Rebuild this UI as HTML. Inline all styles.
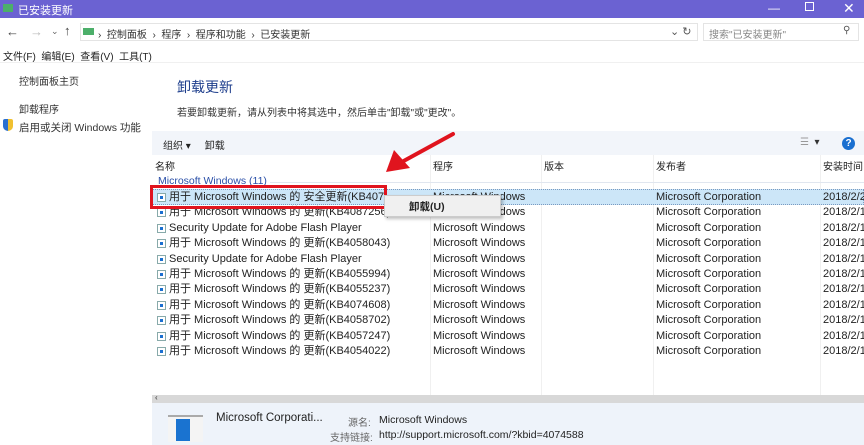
<!DOCTYPE html>
<html><head><meta charset="utf-8"><style>
*{margin:0;padding:0;box-sizing:border-box}
body{width:864px;height:445px;overflow:hidden;background:#fff;font-family:"Liberation Sans","Noto Sans CJK SC",sans-serif;font-size:11px;color:#222;position:relative}
.a{position:absolute;white-space:nowrap}
.row{position:absolute;left:152px;width:712px;height:15px;font-size:11px;line-height:15px;white-space:nowrap}
.row span{position:absolute;white-space:nowrap}
.row span.n{overflow:hidden;width:255px}
.ic{display:inline-block;width:9px;height:9px;border:1px solid #8aa;background:#fff;position:absolute;left:5px;top:3px}
.ic:after{content:"";position:absolute;left:2px;top:2px;width:3px;height:3px;background:#1a6fd0}
</style></head><body>
<div class="a" style="left:0;top:0;width:864px;height:18px;background:#6b62d2"></div>
<div class="a" style="left:3px;top:4px;width:10px;height:8px;background:#4caf6a"></div>
<div class="a" style="left:18px;top:2px;color:#fff;font-size:11px">已安装更新</div>
<div class="a" style="left:768px;top:1px;color:#fff;font-size:12px">—</div>
<div class="a" style="left:805px;top:2px;width:9px;height:9px;border:1px solid #fff"></div>
<div class="a" style="left:843px;top:0px;color:#fff;font-size:14px">✕</div>

<div class="a" style="left:6px;top:24px;font-size:13px;color:#444">←</div>
<div class="a" style="left:30px;top:24px;font-size:13px;color:#bbb">→</div>
<div class="a" style="left:51px;top:26px;font-size:9px;color:#666">⌄</div>
<div class="a" style="left:64px;top:23px;font-size:13px;color:#444">↑</div>
<div class="a" style="left:80px;top:23px;width:618px;height:18px;border:1px solid #e4e4e4"></div>
<div class="a" style="left:83px;top:28px;width:11px;height:7px;background:#4caf6a"></div>
<div class="a" style="left:98px;top:26px;font-size:10px;color:#333">›&nbsp; 控制面板 &nbsp;› &nbsp;程序 &nbsp;› &nbsp;程序和功能 &nbsp;› &nbsp;已安装更新</div>
<div class="a" style="left:670px;top:25px;font-size:11px;color:#555">⌄ ↻</div>
<div class="a" style="left:703px;top:23px;width:156px;height:18px;border:1px solid #e4e4e4"></div>
<div class="a" style="left:709px;top:26px;font-size:10px;color:#888">搜索"已安装更新"</div>
<div class="a" style="left:843px;top:25px;font-size:10px;color:#555">⚲</div>

<div class="a" style="left:3px;top:48px;font-size:10px">文件(F) &nbsp;编辑(E) &nbsp;查看(V) &nbsp;工具(T)</div>
<div class="a" style="left:0;top:62px;width:864px;height:1px;background:#f0f0f0"></div>

<div class="a" style="left:19px;top:73px;font-size:10px;color:#333">控制面板主页</div>
<div class="a" style="left:19px;top:101px;font-size:10px;color:#333">卸载程序</div>
<div class="a" style="left:3px;top:119px;width:10px;height:12px;background:linear-gradient(90deg,#2a6fd0 50%,#f0c030 50%);border-radius:2px 2px 5px 5px"></div>
<div class="a" style="left:19px;top:120px;font-size:10.5px;color:#333">启用或关闭 Windows 功能</div>

<div class="a" style="left:177px;top:77px;font-size:14px;color:#1e3e8c">卸载更新</div>
<div class="a" style="left:177px;top:104px;font-size:10px;color:#333">若要卸载更新，请从列表中将其选中，然后单击"卸载"或"更改"。</div>

<div class="a" style="left:152px;top:131px;width:712px;height:24px;background:#f2f5fa"></div>
<div class="a" style="left:163px;top:137px;font-size:10px">组织 ▾ &nbsp;&nbsp;&nbsp; 卸载</div>
<div class="a" style="left:800px;top:137px;font-size:10px;color:#999">☰ &nbsp;<span style="color:#333">▾</span></div>
<div class="a" style="left:842px;top:137px;width:13px;height:13px;border-radius:50%;background:#1a6fd0;color:#fff;font-size:10px;font-weight:bold;text-align:center;line-height:13px">?</div>

<div class="a" style="left:155px;top:158px;font-size:10px">名称</div>
<div class="a" style="left:433px;top:158px;font-size:10px">程序</div>
<div class="a" style="left:544px;top:158px;font-size:10px">版本</div>
<div class="a" style="left:656px;top:158px;font-size:10px">发布者</div>
<div class="a" style="left:823px;top:158px;font-size:10px">安装时间</div>
<div class="a" style="left:430px;top:155px;width:1px;height:240px;background:#f0f0f0"></div>
<div class="a" style="left:541px;top:155px;width:1px;height:240px;background:#f0f0f0"></div>
<div class="a" style="left:653px;top:155px;width:1px;height:240px;background:#f0f0f0"></div>
<div class="a" style="left:820px;top:155px;width:1px;height:240px;background:#f0f0f0"></div>

<div class="a" style="left:158px;top:175px;font-size:10.5px;color:#2a4fa8">Microsoft Windows (11)</div>
<div class="a" style="left:270px;top:182px;width:594px;height:1px;background:#e0e6ef"></div>

<div class="a" style="left:152px;top:189px;width:712px;height:16px;background:#cce6f8;border:1px dotted #7a9ac0"></div>

<div class="row" style="top:190px"><i class="ic"></i><span class="n" style="left:17px;width:216px">用于 Microsoft Windows 的 安全更新(KB4074588)</span><span style="left:281px">Microsoft Windows</span><span style="left:504px">Microsoft Corporation</span><span style="left:671px">2018/2/2</span></div>
<div class="row" style="top:205px"><i class="ic"></i><span class="n" style="left:17px">用于 Microsoft Windows 的 更新(KB4087256)</span><span style="left:281px">Microsoft Windows</span><span style="left:504px">Microsoft Corporation</span><span style="left:671px">2018/2/1</span></div>
<div class="row" style="top:221px"><i class="ic"></i><span class="n" style="left:17px">Security Update for Adobe Flash Player</span><span style="left:281px">Microsoft Windows</span><span style="left:504px">Microsoft Corporation</span><span style="left:671px">2018/2/1</span></div>
<div class="row" style="top:236px"><i class="ic"></i><span class="n" style="left:17px">用于 Microsoft Windows 的 更新(KB4058043)</span><span style="left:281px">Microsoft Windows</span><span style="left:504px">Microsoft Corporation</span><span style="left:671px">2018/2/1</span></div>
<div class="row" style="top:252px"><i class="ic"></i><span class="n" style="left:17px">Security Update for Adobe Flash Player</span><span style="left:281px">Microsoft Windows</span><span style="left:504px">Microsoft Corporation</span><span style="left:671px">2018/2/1</span></div>
<div class="row" style="top:267px"><i class="ic"></i><span class="n" style="left:17px">用于 Microsoft Windows 的 更新(KB4055994)</span><span style="left:281px">Microsoft Windows</span><span style="left:504px">Microsoft Corporation</span><span style="left:671px">2018/2/1</span></div>
<div class="row" style="top:282px"><i class="ic"></i><span class="n" style="left:17px">用于 Microsoft Windows 的 更新(KB4055237)</span><span style="left:281px">Microsoft Windows</span><span style="left:504px">Microsoft Corporation</span><span style="left:671px">2018/2/1</span></div>
<div class="row" style="top:298px"><i class="ic"></i><span class="n" style="left:17px">用于 Microsoft Windows 的 更新(KB4074608)</span><span style="left:281px">Microsoft Windows</span><span style="left:504px">Microsoft Corporation</span><span style="left:671px">2018/2/1</span></div>
<div class="row" style="top:313px"><i class="ic"></i><span class="n" style="left:17px">用于 Microsoft Windows 的 更新(KB4058702)</span><span style="left:281px">Microsoft Windows</span><span style="left:504px">Microsoft Corporation</span><span style="left:671px">2018/2/1</span></div>
<div class="row" style="top:329px"><i class="ic"></i><span class="n" style="left:17px">用于 Microsoft Windows 的 更新(KB4057247)</span><span style="left:281px">Microsoft Windows</span><span style="left:504px">Microsoft Corporation</span><span style="left:671px">2018/2/1</span></div>
<div class="row" style="top:344px"><i class="ic"></i><span class="n" style="left:17px">用于 Microsoft Windows 的 更新(KB4054022)</span><span style="left:281px">Microsoft Windows</span><span style="left:504px">Microsoft Corporation</span><span style="left:671px">2018/2/1</span></div>

<div class="a" style="left:150px;top:185px;width:237px;height:24px;border:3px solid #e0141e"></div>
<div class="a" style="left:384px;top:195px;width:117px;height:22px;background:#f0f0f0;border:1px solid #ccc;box-shadow:2px 2px 3px rgba(0,0,0,.25)"></div>
<div class="a" style="left:409px;top:199px;font-size:10.5px;font-weight:bold">卸载(U)</div>

<svg class="a" style="left:380px;top:128px" width="80" height="50"><line x1="73" y1="6" x2="20" y2="35" stroke="#e0141e" stroke-width="4" stroke-linecap="round"/><polygon points="6,44 14,22 30,40" fill="#e0141e"/></svg>

<div class="a" style="left:152px;top:395px;width:712px;height:8px;background:#d8d8d8"></div>
<div class="a" style="left:155px;top:393px;font-size:8px;color:#333">‹</div>
<div class="a" style="left:152px;top:403px;width:712px;height:42px;background:#eef3fa"></div>
<div class="a" style="left:168px;top:415px;width:35px;height:27px;background:#f4f4f4;border-top:2px solid #aaa"></div>
<div class="a" style="left:176px;top:419px;width:14px;height:22px;background:#1a73d0"></div>
<div class="a" style="left:216px;top:412px;font-size:11.5px">Microsoft Corporati...</div>
<div class="a" style="left:348px;top:414px;font-size:10px;color:#666">源名:</div>
<div class="a" style="left:379px;top:414px;font-size:10.5px">Microsoft Windows</div>
<div class="a" style="left:330px;top:429px;font-size:10px;color:#666">支持链接:</div>
<div class="a" style="left:379px;top:429px;font-size:10.5px">http://support.microsoft.com/?kbid=4074588</div>
</body></html>
